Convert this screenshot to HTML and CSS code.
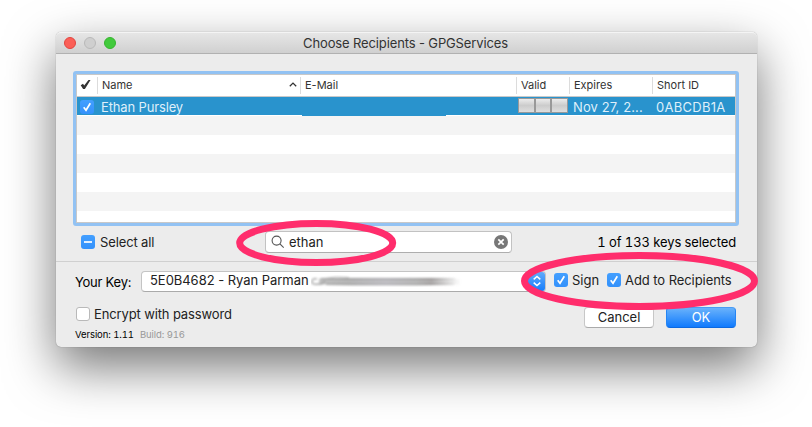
FILE: index.html
```html
<!DOCTYPE html>
<html lang="en">
<head>
<meta charset="utf-8">
<title>Choose Recipients - GPGServices</title>
<link rel="stylesheet" href="styles.css">
</head>
<body>
<main class="window">
  <header class="titlebar">
    <div class="lights"><i class="light close"></i><i class="light minimise"></i><i class="light grow"></i></div>
    <h1><span class="t-title">Choose Recipients - GPGServices</span></h1>
  </header>
  <section class="recipients">
    <div class="table">
      <div class="row head">
        <div class="cell tick"><svg width="11" height="11" viewBox="0 0 11 11"><path d="M.7 6.200 3 4.700 4.200 6.500 8.500 1l2 .1L4.900 9.900H3.100Z" fill="#333"/></svg></div>
        <div class="cell"><span>Name</span><svg class="sort" width="8" height="5" viewBox="0 0 8 5"><path d="M.8 4.300 4 1.100l3.200 3.200" fill="none" stroke="#333" stroke-width="1.300"/></svg></div>
        <div class="cell">E-Mail</div>
        <div class="cell">Valid</div>
        <div class="cell">Expires</div>
        <div class="cell">Short ID</div>
      </div>
      <div class="row selected">
        <div class="cell check-cell"><span class="check on"><svg width="14" height="14" viewBox="0 0 14 14"><path d="m3.700 7.300 2.300 2.900 4.300-7"/></svg></span></div>
        <div class="cell"><span class="t-person">Ethan Pursley</span></div>
        <div class="cell email"><i class="redacted"></i></div>
        <div class="cell valid"><i></i><i></i><i></i></div>
        <div class="cell"><span class="t-date">Nov 27, 2...</span></div>
        <div class="cell"><span class="t-id">0ABCDB1A</span></div>
      </div>
      <div class="stripes"></div>
    </div>
    <div class="filter">
      <label class="option"><span class="check on"><svg width="14" height="14" viewBox="0 0 14 14"><path d="M3 7h8"/></svg></span><span class="t-all">Select all</span></label>
      <div class="search">
        <svg width="14" height="14" viewBox="0 0 14 14" fill="none" stroke="#555" stroke-width="1.100"><circle cx="5.600" cy="5.600" r="4.500"/><path d="m8.900 8.900 3.800 3.800"/></svg>
        <span class="t-query">ethan</span>
        <svg class="clear" width="14" height="14" viewBox="0 0 14 14"><circle cx="7" cy="7" r="7" fill="#777"/><path d="m4.300 4.300 5.400 5.400m0-5.400L4.300 9.700" stroke="#fff" stroke-width="1.700"/></svg>
      </div>
      <div class="count"><span class="t-count">1 of 133 keys selected</span></div>
    </div>
  </section>
  <section class="settings">
    <div class="keyline">
      <span class="keylabel t-key">Your Key:</span>
      <div class="select">
        <span class="t-value">5E0B4682 - Ryan Parman</span>
        <svg class="smudge" width="152" height="12" viewBox="0 0 152 12">
          <defs>
            <linearGradient id="fade" gradientUnits="userSpaceOnUse" x1="0" x2="150" y1="0" y2="0"><stop offset="0" stop-color="#aaa"/><stop offset=".25" stop-color="#999"/><stop offset=".5" stop-color="#a5a4aa"/><stop offset=".7" stop-color="#999"/><stop offset=".8" stop-color="#8c8888"/><stop offset="1" stop-color="#999" stop-opacity="0"/></linearGradient>
            <filter id="soft" filterUnits="userSpaceOnUse" x="-3" y="-3" width="160" height="18"><feGaussianBlur stdDeviation=".8"/></filter>
          </defs>
          <g filter="url(#soft)" fill="none" stroke="url(#fade)"><path d="M6 4Q1 3 1 6.500T6 9q5 1 8-3" stroke-width="1.600"/><path d="M8 6.500q70-1 141 .2" stroke-width="6" opacity=".7"/><path d="M14 3.500Q25 .5 38 2.500" opacity=".6"/><path d="M10 3.700q65 .3 134 .2M15 9.300q60 .7 128-.2" stroke-width="1.400"/></g>
        </svg>
        <span class="stepper"><svg width="10" height="14" viewBox="0 0 10 14" fill="none" stroke="#fff" stroke-width="1.500"><path d="m1.700 5.400 3.300-3 3.300 3m-6.600 3.200 3.300 3 3.300-3"/></svg></span>
      </div>
      <label class="option sign"><span class="check on"><svg width="14" height="14" viewBox="0 0 14 14"><path d="m3.700 7.300 2.300 2.900 4.300-7"/></svg></span><span class="t-sign">Sign</span></label>
      <label class="option add"><span class="check on"><svg width="14" height="14" viewBox="0 0 14 14"><path d="m3.700 7.300 2.300 2.900 4.300-7"/></svg></span><span class="t-add">Add to Recipients</span></label>
    </div>
    <div class="bottom">
      <div>
        <label class="option"><span class="check"></span><span class="t-encrypt">Encrypt with password</span></label>
        <p class="version"><span class="t-version">Version: 1.11</span><span class="build">Build: 916</span></p>
      </div>
      <div class="buttons"><button><span class="t-cancel">Cancel</span></button><button class="primary">OK</button></div>
    </div>
  </section>
</main>
<svg class="marks" width="812" height="427" viewBox="0 0 812 427" fill="none" stroke="#ff2d6c" stroke-width="7"><ellipse cx="316.200" cy="243" rx="76.500" ry="19.500"/><ellipse cx="639.500" cy="281" rx="115" ry="25.500"/></svg>
</body>
</html>
```

FILE: styles.css
```css
* { box-sizing: border-box; }
html { background: #fff; }
body {
  margin: 0;
  height: 427px;
  padding: 32px 0 0 56px;
  overflow: hidden;
  font: 13px/16px Inter, "Liberation Sans", sans-serif;
  color: #222;
  white-space: nowrap;
}
.window {
  width: 701px;
  height: 315px;
  border-radius: 5px;
  background: #ececec;
  box-shadow: 0 0 1px rgba(0,0,0,.45), 0 20px 50px rgba(0,0,0,.54);
}
.titlebar {
  display: grid;
  grid-template-columns: 80px 1fr 80px;
  align-items: center;
  height: 22px;
  border-top: 1px solid #f4f4f4;
  border-bottom: 1px solid #b1b1b1;
  border-radius: 5px 5px 0 0;
  background: linear-gradient(#e6e6e6, #d0d0d0);
}
.lights { display: flex; gap: 8px; padding-left: 8px; }
.light { width: 12px; height: 12px; border-radius: 50%; border: 1px solid #e2453f; background: #fb5f57; }
.minimise { border-color: #b9b9b9; background: #cfcfcf; }
.grow { border-color: #36b52f; background: #42ca3c; }
h1 { margin: 0 2px 0 0; font-size: 13px; font-weight: 400; text-align: center; color: #333; letter-spacing: -.13px; }

.recipients { height: 208px; padding: 17px 17px 0; border-bottom: 1px solid #d0d0d0; }
.table {
  height: 155px;
  width: 666px;
  border: 3px solid #92c2f3;
  border-radius: 3px;
  background: #fff;
  box-shadow: inset 0 0 0 1px #c8c8c8;
  padding: 1px;
}
.row { display: grid; grid-template-columns: 20px 203px 216px 53px 83px 83px; }
.cell { display: flex; align-items: center; }
.head { height: 22px; padding-top: 2px; border-bottom: 1px solid #c9c9c9; font-size: 11px; line-height: 14px; color: #333; }
.head .cell { height: 17px; padding: 0 0 2px 4px; border-left: 1px solid #dcdcdc; }
.head .tick { padding-left: 3px; border: 0; }
.head .cell:nth-child(2) { justify-content: space-between; padding-right: 3px; }
.selected { height: 18px; background: #2993cd; color: #dfeffa; }
.selected .cell { height: 18px; padding: 2px 0 0 4px; }
.selected .check-cell { padding: 1px 0 0 3px; }
.selected .email { align-items: flex-end; padding: 0 0 0 2px; }
.redacted { width: 144px; height: 1px; margin-bottom: -1px; background: #2993cd; }
.selected .valid { padding: 0 0 1px 2px; }
.valid i { width: 16.700px; height: 15px; border: 1px solid #999; background: linear-gradient(#ececec, #ccc 50%, #dedede); }
.stripes { height: 106px; margin-top: 1px; background: repeating-linear-gradient(#f4f4f4 0 19px, #fff 19px 38px); }
.t-person { letter-spacing: -.15px; }
.t-date { letter-spacing: .1px; }
.t-id { letter-spacing: .27px; }

.filter { display: grid; grid-template-columns: 192px 247px 1fr; align-items: center; height: 22px; margin-top: 5px; }
.option { display: flex; align-items: center; gap: 4px; }
.filter .option { padding-left: 8px; gap: 5px; }
.check { display: block; flex: none; width: 14px; height: 14px; border: 1px solid #b9b9b9; border-radius: 3px; background: #fff; }
.check.on { border: 0; background: linear-gradient(#439fff, #3391fb); }
.check svg { display: block; fill: none; stroke: #fff; stroke-width: 1.700px; }
.search { display: flex; align-items: center; height: 22px; padding: 0 3px 0 5px; border: 1px solid #c2c2c2; border-bottom-color: #aeaeae; border-radius: 4px; background: #fff; }
.search .t-query { margin-left: 4px; }
.clear { margin-left: auto; }
.count { padding-right: 4px; text-align: right; color: #000; letter-spacing: -.1px; font-feature-settings: "tnum"; }
.t-all, .t-encrypt { letter-spacing: -.13px; }
.t-add { letter-spacing: -.07px; }

.settings { padding: 8px 21px 0 20px; }
.keyline { display: flex; align-items: center; height: 22px; }
.keylabel { width: 65px; padding-top: 2px; margin-left: -1px; margin-right: 1px; color: #000; letter-spacing: -.25px; }
.keyline .option { margin-top: -2px; }
.select { display: flex; align-items: center; width: 405px; height: 21px; padding-left: 8px; border: 1px solid #c4c4c4; border-bottom-color: #aaa; border-radius: 4px; background: #fff; overflow: hidden; }
.select .t-value { width: 161px; margin-top: -2px; letter-spacing: -.04px; }
.stepper { display: flex; align-items: center; justify-content: center; width: 18px; height: 21px; margin: 0 -1px 0 auto; background: linear-gradient(#64adfb, #127bfb); }
.stepper svg { display: block; }
.keyline .sign { width: 53px; margin-left: 8px; }
.bottom { display: flex; justify-content: space-between; padding-top: 15px; }
.bottom .option { height: 14px; }
.version { display: flex; gap: 6px; margin: 8px 0 0 -1px; font-size: 9.500px; line-height: 12px; color: #000; letter-spacing: -.08px; font-feature-settings: "tnum"; }
.build { color: #999; }
.buttons { display: flex; gap: 12px; }
button { width: 70px; height: 21px; padding: 0 0 1px; border: 1px solid #c7c7c7; border-bottom-color: #aaa; border-radius: 4px; background: #fff; font: inherit; color: #222; }
.primary { border-color: #4a9cf5 #2585f4 #0c69e0; background: linear-gradient(#69b2fb, #107afd); color: #fff; }
.marks { position: absolute; left: 0; top: 0; }
```
